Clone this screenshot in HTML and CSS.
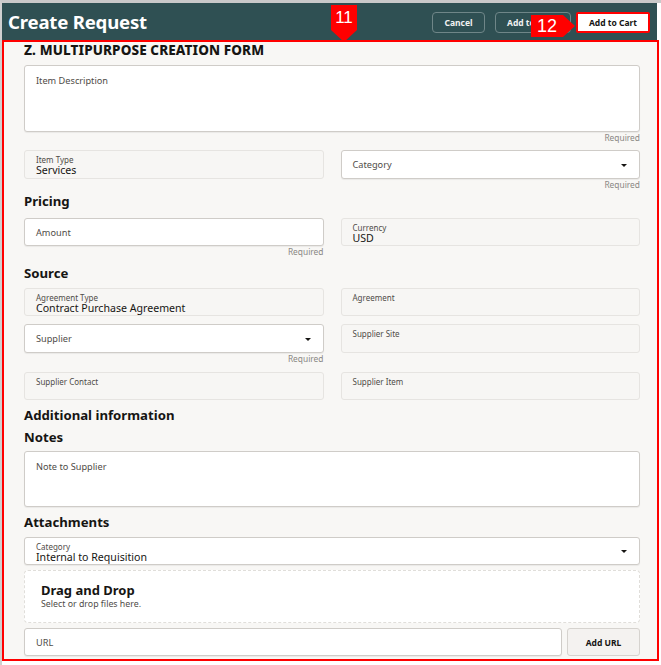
FILE: index.html
```html
<!DOCTYPE html>
<html lang="en">
<head>
<meta charset="UTF-8">
<meta name="viewport" content="width=device-width, initial-scale=1.0">
<title>Create Request</title>
<link rel="stylesheet" href="styles.css">
</head>
<body>
<div class="page">
  <div class="header">
    <h1>Create Request</h1>
    <div class="actions">
      <button class="btn-dark">Cancel</button>
      <button class="btn-dark btn-clip">Add to List</button>
      <button class="btn-cart">Add to Cart</button>
    </div>
  </div>

  <div class="frame">
    <h2 class="form-title">Z. MULTIPURPOSE CREATION FORM</h2>

    <div class="field white area-desc"><span class="ph top">Item Description</span></div>
    <div class="req">Required</div>

    <div class="row r1">
      <div class="field ro"><span class="lbl">Item Type</span><span class="val">Services</span></div>
      <div>
        <div class="field white select"><span class="ph">Category</span><i class="caret"></i></div>
        <div class="req">Required</div>
      </div>
    </div>

    <h3 class="sec s-pricing">Pricing</h3>
    <div class="row r2">
      <div>
        <div class="field white"><span class="ph">Amount</span></div>
        <div class="req">Required</div>
      </div>
      <div class="field ro"><span class="lbl">Currency</span><span class="val">USD</span></div>
    </div>

    <h3 class="sec s-source">Source</h3>
    <div class="row r3">
      <div class="field ro"><span class="lbl">Agreement Type</span><span class="val">Contract Purchase Agreement</span></div>
      <div class="field ro"><span class="lbl">Agreement</span></div>
    </div>
    <div class="row r4">
      <div>
        <div class="field white select tall"><span class="ph">Supplier</span><i class="caret"></i></div>
        <div class="req">Required</div>
      </div>
      <div class="field ro tall"><span class="lbl">Supplier Site</span></div>
    </div>
    <div class="row r5">
      <div class="field ro"><span class="lbl">Supplier Contact</span></div>
      <div class="field ro"><span class="lbl">Supplier Item</span></div>
    </div>

    <h3 class="sec s-add">Additional information</h3>
    <h3 class="sec s-notes">Notes</h3>
    <div class="field white area-notes"><span class="ph top">Note to Supplier</span></div>

    <h3 class="sec s-attach">Attachments</h3>
    <div class="field white select stack att-cat">
      <div><span class="lbl">Category</span><span class="val">Internal to Requisition</span></div>
      <i class="caret"></i>
    </div>
    <div class="dnd">
      <div class="dnd-title">Drag and Drop</div>
      <div class="dnd-sub">Select or drop files here.</div>
    </div>
    <div class="url-row">
      <div class="field white url"><span class="ph">URL</span></div>
      <button class="btn-url">Add URL</button>
    </div>
  </div>

  <div class="marker m11">11</div>
  <div class="marker m12">12</div>
</div>
</body>
</html>
```

FILE: styles.css
```css
body {
  margin: 0;
  padding: 0;
  background-color: #fff;
  font-family: "Noto Sans", "Open Sans", sans-serif;
  color: #161513;
}
.page {
  position: relative;
  width: 659px;
  height: 662px;
  border-top: 3px solid #c9c9c9;
  border-left: 2px solid #d0d0d0;
}
.header {
  height: 37px;
  margin-right: 4px;
  background-color: #2f5053;
  display: flex;
  align-items: center;
  justify-content: space-between;
  padding: 0 7px 0 6px;
}
.header h1 {
  margin: 0;
  color: #fff;
  font-size: 18.6px;
  font-weight: 700;
  letter-spacing: -0.2px;
}
.actions {
  display: flex;
  align-items: center;
  padding-top: 2px;
}
button {
  font-family: inherit;
  font-weight: 700;
  font-size: 8.5px;
  height: 21px;
  border-radius: 4px;
  cursor: pointer;
  padding: 0;
}
.btn-dark {
  background-color: transparent;
  color: #f1f1f1;
  border: 1px solid #6f8688;
  width: 53px;
  margin-right: 10px;
}
.btn-clip {
  width: 76px;
  overflow: hidden;
  white-space: nowrap;
  text-align: left;
  padding-left: 11px;
  margin-right: 5px;
}
.btn-cart {
  width: 74px;
  background-color: #fff;
  color: #161513;
  border: 2px solid #ff0000;
  border-radius: 2px;
}

.frame {
  width: 616px;
  height: 614px;
  border: 2px solid #ff0000;
  background-color: #f8f7f5;
  padding: 0 17px 3px 20px;
}
.form-title {
  margin: 0;
  font-size: 13.5px;
  line-height: 16px;
  font-weight: 800;
  letter-spacing: 0.1px;
}
.sec {
  margin: 0;
  font-size: 13.2px;
  line-height: 16px;
  font-weight: 700;
}
.s-pricing { margin-top: 3px; }
.s-source { margin-top: 8px; }
.s-add { margin-top: 7px; }
.s-notes { margin-top: 6px; }
.s-attach { margin-top: 7px; }

.field {
  box-sizing: border-box;
  height: 28px;
  border-radius: 3px;
  padding: 0 11px;
  display: flex;
  align-items: center;
  position: relative;
}
.field.tall { height: 29px; }
.white {
  background-color: #fff;
  border: 1px solid #cfccc8;
  box-shadow: 0 1px 1px rgba(0, 0, 0, 0.06);
}
.ro {
  background-color: #f7f6f4;
  border: 1px solid #e6e4e1;
  flex-direction: column;
  align-items: flex-start;
  justify-content: flex-start;
  padding-top: 4px;
}
.ph {
  font-size: 9.2px;
  color: #4f4c48;
}
.ph.top {
  position: absolute;
  top: 8px;
  left: 11px;
}
.lbl {
  display: block;
  font-size: 8px;
  line-height: 9px;
  color: #4f4c48;
}
.val {
  display: block;
  font-size: 10.6px;
  line-height: 12px;
  color: #161513;
}
.req {
  text-align: right;
  font-size: 8.4px;
  line-height: 11px;
  height: 11px;
  color: #8a8784;
}
.caret {
  position: absolute;
  right: 12px;
  top: 50%;
  margin-top: -1px;
  width: 0;
  height: 0;
  border-left: 3px solid transparent;
  border-right: 3px solid transparent;
  border-top: 3px solid #161513;
}

.area-desc {
  margin-top: 7px;
  height: 67px;
}
.area-notes {
  margin-top: 6px;
  height: 56px;
}
.row {
  display: grid;
  grid-template-columns: 1fr 1fr;
  column-gap: 17px;
  align-items: start;
}
.r1 { margin-top: 7px; }
.r1 .field { height: 29px; }
.r2 { margin-top: 9px; }
.r3 { margin-top: 7px; }
.r4 { margin-top: 8px; }
.r5 { margin-top: 8px; }

.att-cat {
  margin-top: 7px;
  padding-top: 2px;
}
.dnd {
  box-sizing: border-box;
  margin-top: 5px;
  height: 53px;
  background-color: #fff;
  border: 1px dashed #e0deda;
  border-radius: 4px;
  padding: 11px 16px 0;
}
.dnd-title {
  font-size: 13px;
  line-height: 16px;
  font-weight: 700;
}
.dnd-sub {
  font-size: 8.8px;
  line-height: 12px;
  color: #4f4c48;
}
.url-row {
  display: flex;
  margin-top: 5px;
}
.url {
  flex: 1;
}
.btn-url {
  width: 73px;
  height: 28px;
  margin-left: 5px;
  background-color: #f4f2f0;
  border: 1px solid #d6d3cf;
  border-radius: 3px;
  color: #161513;
}

.marker {
  position: absolute;
  background-color: #ff0000;
  color: #fff;
  font-family: "Liberation Sans", Arial, sans-serif;
  text-align: center;
}
.m11 {
  left: 329px;
  top: 2px;
  width: 26px;
  height: 25px;
  font-size: 17px;
  line-height: 25px;
}
.m11::after {
  content: "";
  position: absolute;
  left: 0;
  top: 25px;
  border-left: 13px solid transparent;
  border-right: 13px solid transparent;
  border-top: 12px solid #ff0000;
}
.m12 {
  left: 529px;
  top: 12px;
  width: 32px;
  height: 22px;
  font-size: 18px;
  line-height: 23px;
}
.m12::after {
  content: "";
  position: absolute;
  left: 32px;
  top: 0;
  border-top: 11px solid transparent;
  border-bottom: 11px solid transparent;
  border-left: 12px solid #ff0000;
}
```
